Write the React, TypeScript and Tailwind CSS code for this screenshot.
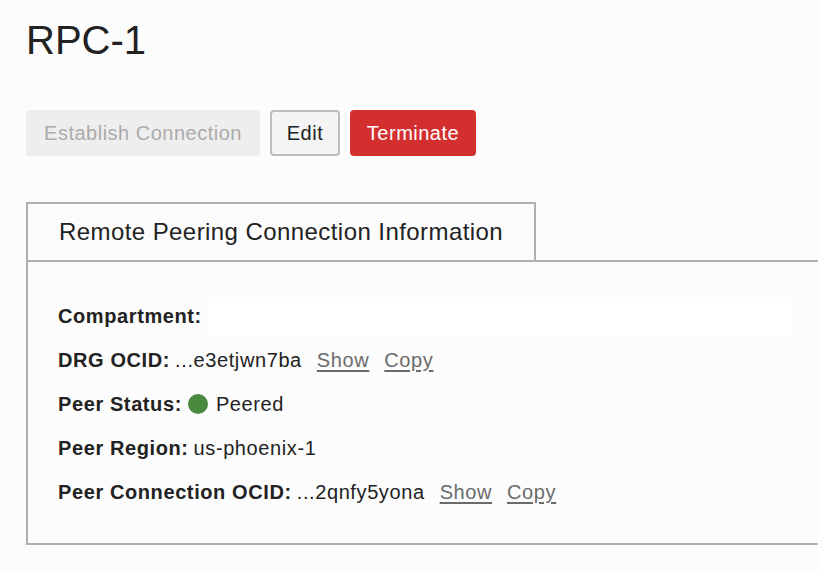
import React from "react";

const font = { fontFamily: '"Liberation Sans", Arial, sans-serif' };

function Row({ children, className = "" }: { children: React.ReactNode; className?: string }) {
  return (
    <div className={"flex h-[44px] items-center text-[20px] tracking-[0.6px] text-[#222] " + className}>
      {children}
    </div>
  );
}

function LinkText({ children }: { children: React.ReactNode }) {
  return <span className="ml-[15px] text-[#6b6b6b] underline underline-offset-[3px]">{children}</span>;
}

export default function App() {
  return (
    <div style={font} className="min-h-screen w-full overflow-hidden bg-[#fcfcfc] px-[26px] pt-[20px]">
      <h1 className="text-[40px] leading-[40px] font-normal text-[#222]">RPC-1</h1>

      <div className="mt-[50px] flex gap-[10px] tracking-[0.5px]">
        <button className="h-[46px] w-[234px] rounded-[4px] bg-[#eeeeee] text-[20px] text-[#ababab]">
          Establish Connection
        </button>
        <button className="h-[46px] w-[70px] rounded-[4px] border-2 border-[#b9bdc4] bg-[#f4f4f4] text-[20px] text-[#222]">
          Edit
        </button>
        <button className="h-[46px] w-[126px] rounded-[4px] bg-[#d42f2f] text-[20px] text-white">
          Terminate
        </button>
      </div>

      <div className="mt-[46px] mr-[-40px]">
        <div className="flex h-[58px] w-[510px] items-center justify-center border-x-2 border-t-2 border-[#b0b0b0] text-[24px] tracking-[0.43px] text-[#222]">
          Remote Peering Connection Information
        </div>
        <div className="border-2 border-[#b0b0b0] pt-[32px] pb-[29px] pl-[30px]">
          <Row>
            <span className="font-bold">Compartment:</span>
            <div className="ml-[6px] h-[39px] w-[584px] bg-white" />
          </Row>
          <Row>
            <span className="font-bold">DRG OCID:</span>
            <span className="ml-[5px]">...e3etjwn7ba</span>
            <LinkText>Show</LinkText>
            <LinkText>Copy</LinkText>
          </Row>
          <Row>
            <span className="font-bold">Peer Status:</span>
            <span className="ml-[6px] inline-block h-[20px] w-[20px] rounded-full bg-[#4a8a3e]" />
            <span className="ml-[8px]">Peered</span>
          </Row>
          <Row>
            <span className="font-bold">Peer Region:</span>
            <span className="ml-[5px]">us-phoenix-1</span>
          </Row>
          <Row>
            <span className="font-bold">Peer Connection OCID:</span>
            <span className="ml-[5px]">...2qnfy5yona</span>
            <LinkText>Show</LinkText>
            <LinkText>Copy</LinkText>
          </Row>
        </div>
      </div>
    </div>
  );
}
